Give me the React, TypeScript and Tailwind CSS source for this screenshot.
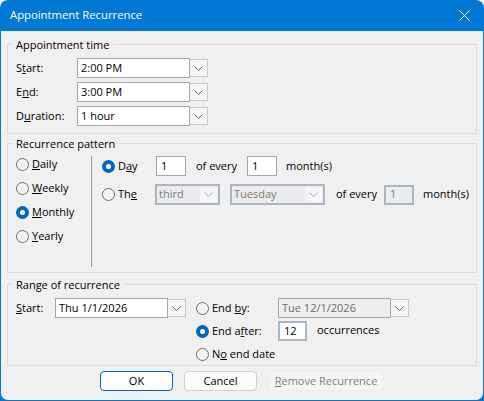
import React from 'react';

const Chevron = ({ muted }: { muted?: boolean }) => (
  <svg width="9" height="5" viewBox="0 0 9 5" fill="none" stroke={muted ? '#b0b0b0' : '#606060'} strokeWidth="1">
    <path d="M0.5 0.5 L4.5 4.5 L8.5 0.5" />
  </svg>
);

const Radio = ({ checked }: { checked?: boolean }) =>
  checked ? (
    <span className="w-[13px] h-[13px] shrink-0 rounded-full bg-[#0067c0] flex items-center justify-center">
      <span className="w-[5px] h-[5px] rounded-full bg-white" />
    </span>
  ) : (
    <span className="w-[13px] h-[13px] shrink-0 rounded-full border border-[#6e6e6e] bg-[#f3f3f3]" />
  );

const RadioLabel = ({ checked, children, className = '' }: { checked?: boolean; children: React.ReactNode; className?: string }) => (
  <div className={`flex items-center gap-[3px] ${className}`}>
    <Radio checked={checked} />
    <span>{children}</span>
  </div>
);

const Combo = ({ value, width, disabled }: { value: string; width: string; disabled?: boolean }) => (
  <div className={`flex items-center ${width}`}>
    <div className={`flex-1 h-5 border border-[#a6a6a6] pl-[3px] flex items-center ${disabled ? 'bg-[#eeeeee] text-[#6d6d6d]' : 'bg-white'}`}>
      {value}
    </div>
    <div className="w-[18px] h-[18px] border border-[#c3cdd6] border-l-0 bg-[#f5f5f5] flex items-center justify-center">
      <Chevron />
    </div>
  </div>
);

const DisabledSelect = ({ value, width }: { value: string; width: string }) => (
  <div className={`h-[21px] border-2 border-[#a9b6c6] bg-[#ececec] pl-[2px] pr-px flex items-center justify-between text-[#7a7a7a] ${width}`}>
    <span>{value}</span>
    <div className="w-[17px] h-[15px] bg-[#f5f5f5] flex items-center justify-center">
      <Chevron muted />
    </div>
  </div>
);

const NumberBox = ({ value, width, focused, disabled }: { value: string; width: string; focused?: boolean; disabled?: boolean }) => (
  <div
    className={`h-5 pl-1 flex items-center ${width} ${
      disabled
        ? 'border-2 border-[#a9b6c6] bg-[#ececec] text-[#7a7a7a]'
        : focused
          ? 'border-2 border-[#a9b6c6] bg-white'
          : 'border border-[#a6a6a6] bg-white'
    }`}
  >
    {value}
  </div>
);

const Group = ({ title, className, children }: { title: string; className: string; children: React.ReactNode }) => (
  <div className={`relative mx-[6px] border border-[#dcdcdc] ${className}`}>
    <span className="absolute -top-[8px] left-[4px] px-[4px] bg-[#f0f0f0] leading-[16px]">{title}</span>
    {children}
  </div>
);

const TimeRow = ({ label, value }: { label: React.ReactNode; value: string }) => (
  <div className="flex items-center h-5">
    <span className="w-[61px]">{label}</span>
    <Combo value={value} width="w-[131px]" />
  </div>
);

const DialogButton = ({ children, className }: { children: React.ReactNode; className: string }) => (
  <div className={`h-5 rounded-[4px] flex items-center justify-center ${className}`}>{children}</div>
);

export default function App() {
  return (
    <div className="w-[484px] h-[401px] bg-[#0078d4] rounded-t-[8px] flex flex-col text-[11px] text-black overflow-hidden font-['Open_Sans','Noto_Sans',sans-serif]">
      <div className="h-[31px] shrink-0 flex items-center justify-between pl-[10px] pr-[14px] text-white text-[11.3px]">
        <span>Appointment Recurrence</span>
        <svg width="11" height="11" viewBox="0 0 11 11" stroke="#ffffff" strokeWidth="1" fill="none">
          <path d="M0.5 0.5 L10.5 10.5 M10.5 0.5 L0.5 10.5" />
        </svg>
      </div>

      <div className="flex-1 mx-px mb-px bg-[#f0f0f0] rounded-b-[7px] pt-[13px]">
        <Group title="Appointment time" className="h-[90px] pl-2 pt-[13px] flex flex-col gap-1">
          <TimeRow label={<>S<u>t</u>art:</>} value="2:00 PM" />
          <TimeRow label={<>E<u>n</u>d:</>} value="3:00 PM" />
          <TimeRow label={<>D<u>u</u>ration:</>} value="1 hour" />
        </Group>

        <Group title="Recurrence pattern" className="mt-[9px] h-[130px] pl-2 pt-[12px] flex">
          <div className="w-[76px] h-[111px] border-r border-[#a0a0a0] flex flex-col gap-[10px] pt-[1px]">
            <RadioLabel className="h-[14px]"><u>D</u>aily</RadioLabel>
            <RadioLabel className="h-[14px]"><u>W</u>eekly</RadioLabel>
            <RadioLabel checked className="h-[14px]"><u>M</u>onthly</RadioLabel>
            <RadioLabel className="h-[14px]"><u>Y</u>early</RadioLabel>
          </div>
          <div className="pl-[10px] flex flex-col gap-2">
            <div className="flex items-center h-5">
              <RadioLabel checked className="w-[54px]">D<u>a</u>y</RadioLabel>
              <NumberBox value="1" width="w-[30px]" />
              <span className="ml-[10px] w-[51px]">of every</span>
              <NumberBox value="1" width="w-[30px]" />
              <span className="ml-[9px]">month(s)</span>
            </div>
            <div className="flex items-center h-[21px]">
              <RadioLabel className="w-[53px]">Th<u>e</u></RadioLabel>
              <DisabledSelect value="third" width="w-[65px]" />
              <span className="w-[10px]" />
              <DisabledSelect value="Tuesday" width="w-[95px]" />
              <span className="ml-[11px] w-[48px]">of every</span>
              <NumberBox value="1" width="w-[30px]" disabled />
              <span className="ml-[9px]">month(s)</span>
            </div>
          </div>
        </Group>

        <Group title="Range of recurrence" className="mt-[11px] h-[82px] pl-2 pt-[13px] flex">
          <div className="flex items-center h-5">
            <span className="w-[39px]"><u>S</u>tart:</span>
            <Combo value="Thu 1/1/2026" width="w-[131px]" />
          </div>
          <div className="ml-[10px] flex flex-col gap-[3px]">
            <div className="flex items-center h-5">
              <RadioLabel className="w-[82px]">End <u>b</u>y:</RadioLabel>
              <Combo value="Tue 12/1/2026" width="w-[131px]" disabled />
            </div>
            <div className="flex items-center h-5">
              <RadioLabel checked className="w-[82px]">End a<u>f</u>ter:</RadioLabel>
              <NumberBox value="12" width="w-[29px]" focused />
              <span className="ml-[10px] -mt-[2px]">occurrences</span>
            </div>
            <RadioLabel className="h-5">N<u>o</u> end date</RadioLabel>
          </div>
        </Group>

        <div className="mt-[5px] pl-[99px] flex gap-[11px]">
          <DialogButton className="w-[73px] border border-[#0067c0] bg-[#fdfdfd]">OK</DialogButton>
          <DialogButton className="w-[73px] border border-[#d0d0d0] bg-[#fbfbfb]">Cancel</DialogButton>
          <DialogButton className="w-[116px] bg-[#f5f5f5] border border-[#ebebeb] text-[#7f7f7f]"><span><u>R</u>emove Recurrence</span></DialogButton>
        </div>
      </div>
    </div>
  );
}
